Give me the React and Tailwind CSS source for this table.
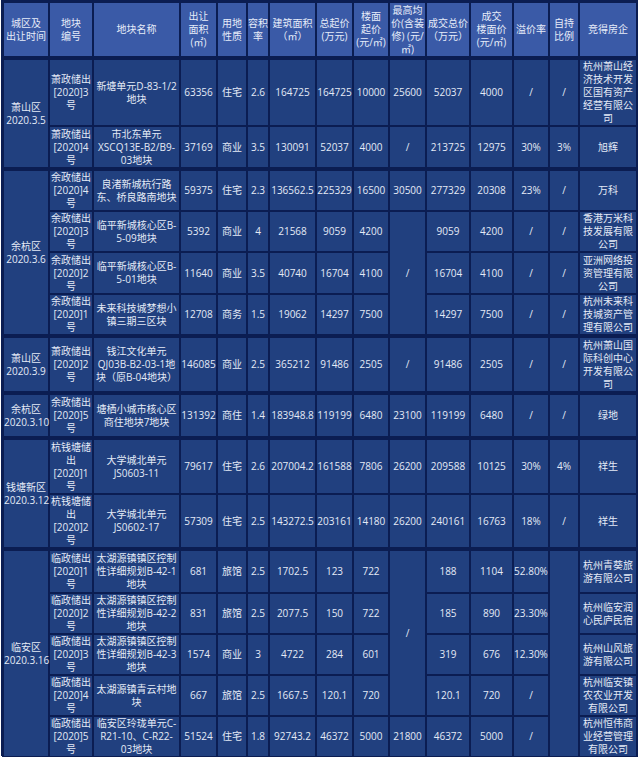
const head = [
    '城区及\n出让时间', '地块\n编号', '地块名称', '出让\n面积\n(㎡)', '用地\n性质', '容积\n率', '建筑面积\n（㎡）',
    '总起价\n(万元)', '楼面\n起价\n(元/㎡)', '最高均\n价(含装\n修) (元/\n㎡)', '成交总价\n（万元）', '成交\n楼面价\n(元/㎡)', '溢价率', '自持\n比例', '竞得房企',
];

const widths = ['w-[46px]', 'w-[44px]', 'w-[87px]', 'w-[37px]', 'w-[30px]', 'w-[22px]', 'w-[47px]', 'w-[37px]', 'w-[36px]', 'w-[37px]', 'w-[44px]', 'w-[43px]', 'w-[36px]', 'w-[30px]', 'w-[58px]'];

// each row: height class, whether it opens a new group, and its cells ({ t, rs } or plain strings)
const rows = [
    { h: 'h-[66px]', first: true, cells: [
        { t: '萧山区\n2020.3.5', rs: 2 }, '萧政储出\n[2020]3\n号', '新塘单元D-83-1/2\n地块', '63356', '住宅', '2.6', '164725', '164725', '10000', '25600', '52037', '4000', '/', '/', '杭州萧山经\n济技术开发\n区国有资产\n经营有限公\n司',
    ] },
    { h: 'h-[43px]', cells: [
        '萧政储出\n[2020]4\n号', '市北东单元\nXSCQ13E-B2/B9-\n03地块', '37169', '商业', '3.5', '130091', '52037', '4000', '/', '213725', '12975', '30%', '3%', '旭辉',
    ] },
    { h: 'h-[42px]', first: true, cells: [
        { t: '余杭区\n2020.3.6', rs: 4 }, '余政储出\n[2020]4\n号', '良渚新城杭行路\n东、桥良路南地块', '59375', '住宅', '2.3', '136562.5', '225329', '16500', '30500', '277329', '20308', '23%', '/', '万科',
    ] },
    { h: 'h-[41px]', cells: [
        '余政储出\n[2020]3\n号', '临平新城核心区B-\n5-09地块', '5392', '商业', '4', '21568', '9059', '4200', { t: '/', rs: 3 }, '9059', '4200', '/', '/', '香港万米科\n技发展有限\n公司',
    ] },
    { h: 'h-[42px]', cells: [
        '余政储出\n[2020]2\n号', '临平新城核心区B-\n5-01地块', '11640', '商业', '3.5', '40740', '16704', '4100', '16704', '4100', '/', '/', '亚洲网络投\n资管理有限\n公司',
    ] },
    { h: 'h-[42px]', cells: [
        '余政储出\n[2020]1\n号', '未来科技城梦想小\n镇三期三区块', '12708', '商务', '1.5', '19062', '14297', '7500', '14297', '7500', '/', '/', '杭州未来科\n技城资产管\n理有限公司',
    ] },
    { h: 'h-[57px]', first: true, cells: [
        '萧山区\n2020.3.9', '萧政储出\n[2020]2\n号', '钱江文化单元\nQJ03B-B2-03-1地\n块（原B-04地块）', '146085', '商业', '2.5', '365212', '91486', '2505', '/', '91486', '2505', '/', '/', '杭州萧山国\n际科创中心\n开发有限公\n司',
    ] },
    { h: 'h-[45px]', first: true, cells: [
        '余杭区\n2020.3.10', '余政储出\n[2020]5\n号', '塘栖小城市核心区\n商住地块7地块', '131392', '商住', '1.4', '183948.8', '119199', '6480', '23100', '119199', '6480', '/', '/', '绿地',
    ] },
    { h: 'h-[56px]', first: true, cells: [
        { t: '钱塘新区\n2020.3.12', rs: 2 }, '杭钱塘储\n出\n[2020]1\n号', '大学城北单元\nJS0603-11', '79617', '住宅', '2.6', '207004.2', '161588', '7806', '26200', '209588', '10125', '30%', '4%', '祥生',
    ] },
    { h: 'h-[55px]', cells: [
        '杭钱塘储\n出\n[2020]2\n号', '大学城北单元\nJS0602-17', '57309', '住宅', '2.5', '143272.5', '203161', '14180', '26200', '240161', '16763', '18%', '/', '祥生',
    ] },
    { h: 'h-[44px]', first: true, cells: [
        { t: '临安区\n2020.3.16', rs: 5 }, '临政储出\n[2020]1\n号', '太湖源镇镇区控制\n性详细规划B-42-1\n地块', '681', '旅馆', '2.5', '1702.5', '123', '722', { t: '/', rs: 4 }, '188', '1104', '52.80%', { t: '', rs: 5 }, '杭州青葵旅\n游有限公司',
    ] },
    { h: 'h-[41px]', cells: [
        '临政储出\n[2020]2\n号', '太湖源镇镇区控制\n性详细规划B-42-2\n地块', '831', '旅馆', '2.5', '2077.5', '150', '722', '185', '890', '23.30%', '杭州临安润\n心民庐民宿',
    ] },
    { h: 'h-[41px]', cells: [
        '临政储出\n[2020]3\n号', '太湖源镇镇区控制\n性详细规划B-42-3\n地块', '1574', '商业', '3', '4722', '284', '601', '319', '676', '12.30%', '杭州山风旅\n游有限公司',
    ] },
    { h: 'h-[41px]', cells: [
        '临政储出\n[2020]4\n号', '太湖源镇青云村地\n块', '667', '旅馆', '2.5', '1667.5', '120.1', '720', '120.1', '720', '/', '杭州临安镇\n农农业开发\n有限公司',
    ] },
    { h: 'h-[41px]', cells: [
        '临政储出\n[2020]5\n号', '临安区玲珑单元C-\nR21-10、C-R22-\n03地块', '51524', '住宅', '1.8', '92743.2', '46372', '5000', '21800', '46372', '5000', '/', '杭州恒伟商\n业经营管理\n有限公司',
    ] },
];

const Lines = ({ text }) => text.split('\n').map((l, i) => (
    <span key={i} className="block whitespace-nowrap">{l}</span>
));

export default function App() {
    return (
        <div className="w-[640px] h-[757px] bg-white font-['Open_Sans','Noto_Sans_CJK_SC',sans-serif]">
            <div className="ml-[1px] w-[637px] h-[756px] bg-[#0b1d52] pt-[1px] pl-[1px]">
                <table className="table-fixed border-collapse w-[634px] text-[10px] leading-[13px] text-center">
                    <colgroup>
                        {widths.map((w, i) => <col key={i} className={w} />)}
                    </colgroup>
                    <thead>
                        <tr className="h-[56px]">
                            {head.map((h, i) => (
                                <th key={i} className="border-2 border-[#0b1d52] bg-[#3a5aa7] text-[#e6ecf9] font-normal p-0 align-middle">
                                    <Lines text={h} />
                                </th>
                            ))}
                        </tr>
                    </thead>
                    <tbody>
                        {rows.map((row, ri) => (
                            <tr key={ri} className={row.h}>
                                {row.cells.map((c, ci) => {
                                    const cell = typeof c === 'string' ? { t: c } : c;
                                    return (
                                        <td
                                            key={ci}
                                            rowSpan={cell.rs || 1}
                                            className={`border-2 border-[#0b1d52] bg-[#21407f] text-[#e4eaf6] p-0 align-middle ${row.first ? 'border-t-4' : ''}`}
                                        >
                                            <Lines text={cell.t} />
                                        </td>
                                    );
                                })}
                            </tr>
                        ))}
                    </tbody>
                </table>
            </div>
        </div>
    );
}
